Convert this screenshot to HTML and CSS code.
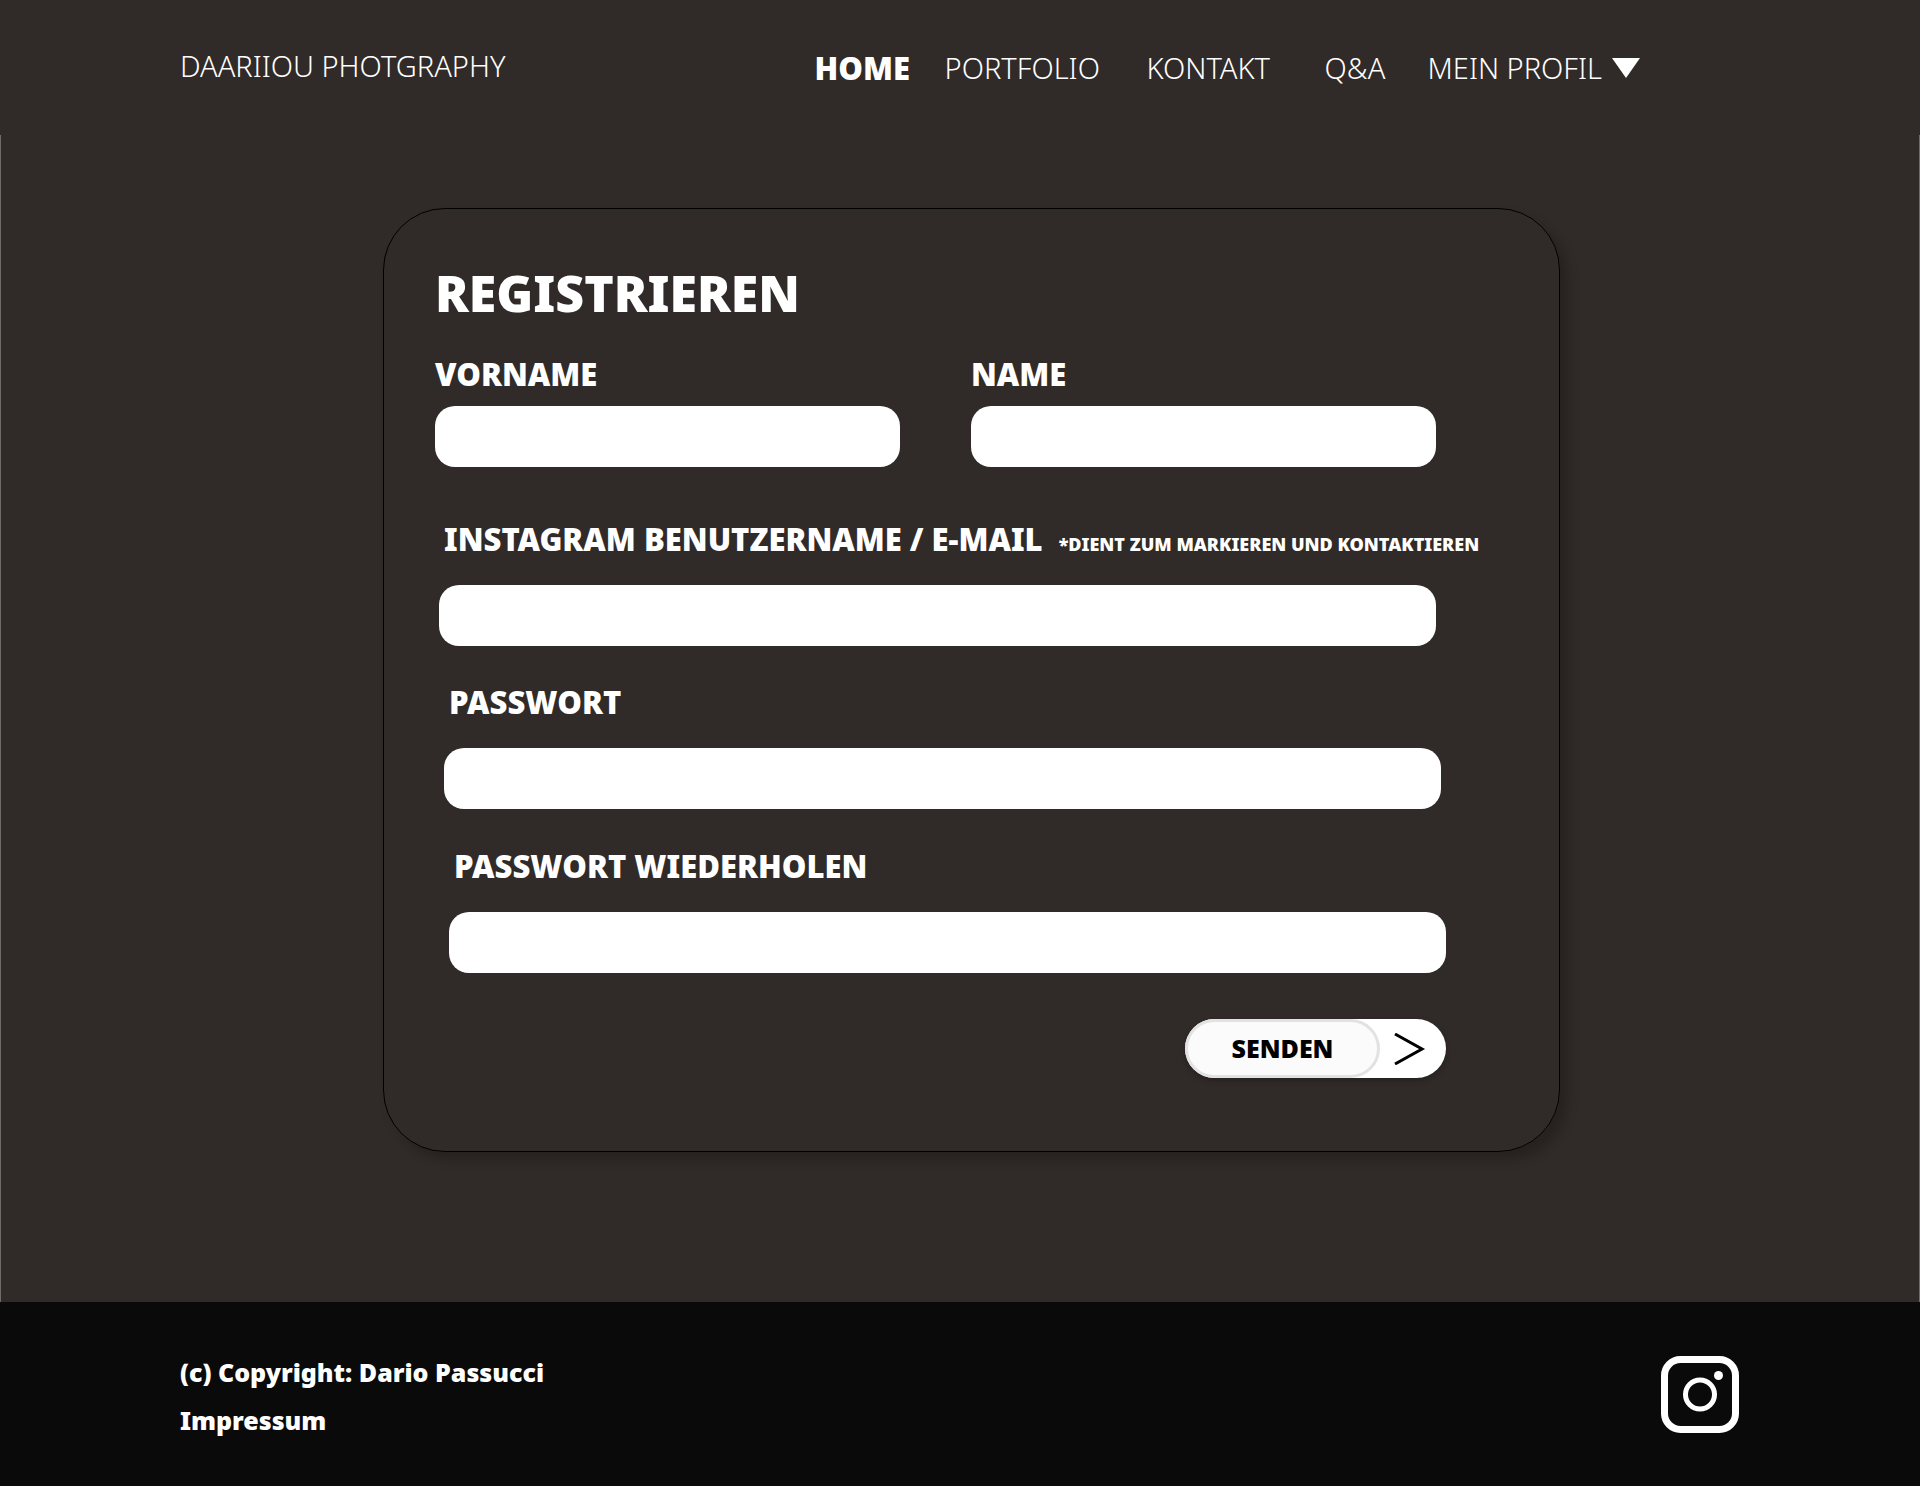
FILE: index.html
```
<!DOCTYPE html>
<html lang="de">
<head>
<meta charset="utf-8">
<meta name="viewport" content="width=device-width, initial-scale=1">
<title>Daariiou Photgraphy – Registrieren</title>
<link rel="stylesheet" href="styles.css">
</head>
<body>
<header class="site-header">
  <a class="brand" href="#">DAARIIOU PHOTGRAPHY</a>
  <nav class="nav">
    <a class="nav-link nav-link--active" href="#">HOME</a>
    <a class="nav-link" href="#">PORTFOLIO</a>
    <a class="nav-link" href="#">KONTAKT</a>
    <a class="nav-link" href="#">Q&amp;A</a>
    <a class="nav-link nav-link--profile" href="#">MEIN PROFIL
      <svg class="caret" viewBox="0 0 28 20" aria-hidden="true"><path d="M0 0H28L14 20Z"/></svg>
    </a>
  </nav>
</header>
<main class="main">
  <form class="card">
    <h1 class="title">REGISTRIEREN</h1>
    <div class="name-row">
      <div class="field">
        <label class="label" for="vorname">VORNAME</label>
        <input class="input" id="vorname" type="text">
      </div>
      <div class="field">
        <label class="label" for="name">NAME</label>
        <input class="input" id="name" type="text">
      </div>
    </div>
    <div class="field field--wide field--contact">
      <label class="label" for="kontakt">INSTAGRAM BENUTZERNAME / E-MAIL <small class="hint">*DIENT ZUM MARKIEREN UND KONTAKTIEREN</small></label>
      <input class="input" id="kontakt" type="text">
    </div>
    <div class="field field--wide field--password">
      <label class="label" for="passwort">PASSWORT</label>
      <input class="input" id="passwort" type="password">
    </div>
    <div class="field field--wide field--repeat">
      <label class="label" for="wiederholen">PASSWORT WIEDERHOLEN</label>
      <input class="input" id="wiederholen" type="password">
    </div>
    <button class="send" type="submit">
      <span class="send-label">SENDEN</span>
      <svg class="send-arrow" viewBox="0 0 32 32" aria-hidden="true"><path d="M1 1L28 16L1 31"/></svg>
    </button>
  </form>
</main>
<footer class="site-footer">
  <div class="footer-text">
    <p class="copyright">(c) Copyright: Dario Passucci</p>
    <a class="imprint" href="#">Impressum</a>
  </div>
  <a class="instagram" href="#" aria-label="Instagram">
    <svg viewBox="0 0 78 77" aria-hidden="true">
      <rect x="3.5" y="3.5" width="71" height="70" rx="16" stroke-width="7"/>
      <circle cx="39" cy="38.5" r="14.5" stroke-width="5"/>
      <circle class="dot" cx="57.5" cy="19.5" r="4.5"/>
    </svg>
  </a>
</footer>
</body>
</html>
```
FILE: styles.css
```
* {
  box-sizing: border-box;
}

body {
  margin: 0;
  min-height: 100vh;
  display: flex;
  flex-direction: column;
  background: #302a28;
  color: #fff;
  font-family: "Noto Sans", "Open Sans", sans-serif;
}

a {
  color: inherit;
  text-decoration: none;
}

.site-header {
  display: flex;
  justify-content: space-between;
  align-items: flex-start;
  padding: 44px 280px 45px 180px;
  font-size: 29px;
  line-height: 44px;
  font-weight: 300;
  white-space: nowrap;
}

.nav {
  display: grid;
  grid-template-columns: 130px 202px 178px 103px auto;
  padding-top: 2px;
}

.nav-link--active {
  font-size: 31px;
  font-weight: 900;
}

.nav-link--profile {
  display: flex;
  align-items: center;
  gap: 10px;
}

.caret {
  width: 28px;
  height: 20px;
  fill: #fff;
}

.main {
  flex: 1;
  display: grid;
  grid-template-columns: 382fr minmax(0, 1177fr) 359fr;
  align-items: start;
  padding: 73px 0 150px;
  border: solid #6f6b6a;
  border-width: 0 1px;
}

.card {
  grid-column: 2;
  display: flex;
  flex-direction: column;
  padding: 50px 113px 73px 51px;
  border: 1px solid #000;
  border-radius: 62px;
  box-shadow: 8px 8px 12px rgba(0, 0, 0, 0.2);
}

.title {
  margin: 0 0 25px;
  font-size: 50px;
  line-height: 68px;
  font-weight: 900;
}

.name-row {
  display: grid;
  grid-template-columns: 1fr 1fr;
  gap: 71px;
  margin-right: 10px;
}

.field {
  display: flex;
  flex-direction: column;
  gap: 10px;
}

.field--wide {
  gap: 24px;
}

.field--wide .label {
  padding-left: 5px;
}

.field--contact {
  margin: 50px 10px 0 4px;
}

.field--password {
  margin: 34px 5px 0 9px;
}

.field--repeat {
  margin: 35px 0 0 14px;
}

.label {
  font-size: 31px;
  line-height: 44px;
  font-weight: 900;
  white-space: nowrap;
}

.hint {
  margin-left: 8px;
  font-size: 18px;
  line-height: 1;
}

.input {
  width: 100%;
  height: 61px;
  padding: 0 20px;
  border: 0;
  border-radius: 20px;
  background: #fff;
  font: inherit;
  font-size: 25px;
}

.send {
  align-self: flex-end;
  display: flex;
  align-items: center;
  width: 261px;
  height: 59px;
  margin-top: 46px;
  padding: 0;
  border: 0;
  border-radius: 30px;
  background: #fff;
  color: #000;
  font: inherit;
  box-shadow: 0 3px 6px rgba(0, 0, 0, 0.2);
}

.send-label {
  width: 195px;
  border: 3px solid #e2e2e2;
  border-radius: 30px;
  background: #fbfbfb;
  font-size: 25px;
  line-height: 53px;
  font-weight: 900;
}

.send-arrow {
  width: 32px;
  height: 32px;
  margin-left: 14px;
  fill: none;
  stroke: #000;
  stroke-width: 3;
}

.site-footer {
  display: flex;
  justify-content: space-between;
  align-items: flex-start;
  padding: 46px 181px 43px 180px;
  background: #0a0a0a;
  font-size: 25px;
  line-height: 48px;
  font-weight: 900;
}

.footer-text {
  display: flex;
  flex-direction: column;
}

.copyright {
  margin: 0;
}

.instagram {
  width: 78px;
  height: 77px;
  margin-top: 8px;
}

.instagram svg {
  display: block;
  fill: none;
  stroke: #fff;
}

.instagram .dot {
  fill: #fff;
  stroke: none;
}
```
